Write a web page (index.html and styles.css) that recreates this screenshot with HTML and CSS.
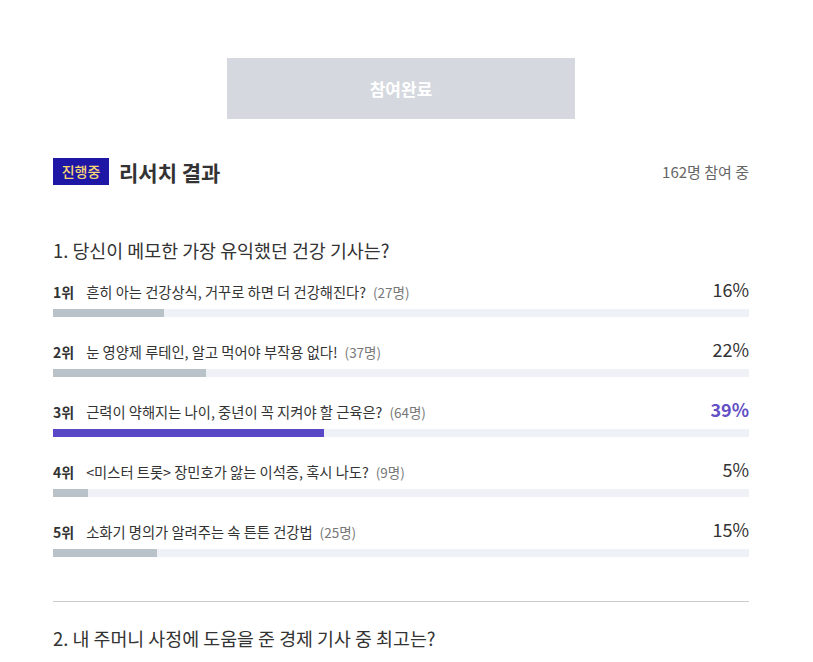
FILE: index.html
```html
<!DOCTYPE html>
<html>
<head>
	<meta charset="utf-8">
	<title>리서치 결과</title>
	<link rel="stylesheet" href="styles.css">
</head>
<body>
	<div class="wrap">
		<div class="btn-done">참여완료</div>

		<div class="head">
			<h2 class="head-title"><span class="badge">진행중</span>리서치 결과</h2>
			<span class="head-count">162명 참여 중</span>
		</div>

		<div class="quest">
			<h3 class="q-title">1. 당신이 메모한 가장 유익했던 건강 기사는?</h3>
			<ul class="rank-list">
				<li class="rank-item">
					<div class="row">
						<p class="label"><b>1위</b>흔히 아는 건강상식, 거꾸로 하면 더 건강해진다?<em>(27명)</em></p>
						<span class="pct">16%</span>
					</div>
					<div class="bar"><i style="width: 16%"></i></div>
				</li>
				<li class="rank-item">
					<div class="row">
						<p class="label"><b>2위</b>눈 영양제 루테인, 알고 먹어야 부작용 없다!<em>(37명)</em></p>
						<span class="pct">22%</span>
					</div>
					<div class="bar"><i style="width: 22%"></i></div>
				</li>
				<li class="rank-item best">
					<div class="row">
						<p class="label"><b>3위</b>근력이 약해지는 나이, 중년이 꼭 지켜야 할 근육은?<em>(64명)</em></p>
						<span class="pct">39%</span>
					</div>
					<div class="bar"><i style="width: 39%"></i></div>
				</li>
				<li class="rank-item">
					<div class="row">
						<p class="label"><b>4위</b>&lt;미스터 트롯&gt; 장민호가 앓는 이석증, 혹시 나도?<em>(9명)</em></p>
						<span class="pct">5%</span>
					</div>
					<div class="bar"><i style="width: 5%"></i></div>
				</li>
				<li class="rank-item">
					<div class="row">
						<p class="label"><b>5위</b>소화기 명의가 알려주는 속 튼튼 건강법<em>(25명)</em></p>
						<span class="pct">15%</span>
					</div>
					<div class="bar"><i style="width: 15%"></i></div>
				</li>
			</ul>
		</div>

		<div class="quest quest-next">
			<h3 class="q-title">2. 내 주머니 사정에 도움을 준 경제 기사 중 최고는?</h3>
		</div>
	</div>
</body>
</html>
```

FILE: styles.css
```css
* {margin: 0; padding: 0;}
ul {list-style: none;}
body {background: #fff; font-family: "Noto Sans CJK KR", "Noto Sans", sans-serif; color: #333;}

.wrap {width: 696px; padding: 58px 0 0 53px;}

.btn-done {margin-left: 174px; width: 348px; height: 61px; line-height: 61px; background: #d5d9df; color: #fff; font-size: 17px; font-weight: bold; text-align: center;}

.head {display: flex; justify-content: space-between; align-items: center; margin-top: 39px; height: 27px;}
.head-title {display: flex; align-items: center; font-size: 21px; font-weight: bold; color: #333;}
.badge {display: inline-block; width: 56px; height: 27px; line-height: 27px; margin-right: 10px; background: #1e17a6; color: #f7d774; font-size: 14px; font-weight: 500; text-align: center;}
.head-count {font-size: 15px; color: #666;}

.quest {margin-top: 52px;}
.q-title {font-size: 18.4px; line-height: 26px; font-weight: normal; color: #333;}

.rank-list {margin-top: 16px;}
.rank-item {margin-bottom: 22px;}
.row {display: flex; justify-content: space-between; align-items: center; height: 24px;}
.label {font-size: 14.3px; color: #333;}
.label b {margin-right: 12px; font-size: 14px;}
.label em {margin-left: 7px; font-size: 13.5px; font-style: normal; color: #777;}
.pct {margin-top: -4px; font-size: 18px; color: #333;}
.bar {margin-top: 6px; height: 8px; background: #eef1f5;}
.bar i {display: block; height: 100%; background: #b9c1c9;}

.best .pct {color: #6350c4; font-weight: bold;}
.best .bar i {background: #5a47c6;}

.quest-next {margin-top: 44px; padding-top: 23px; border-top: 1px solid #ccc;}
```
